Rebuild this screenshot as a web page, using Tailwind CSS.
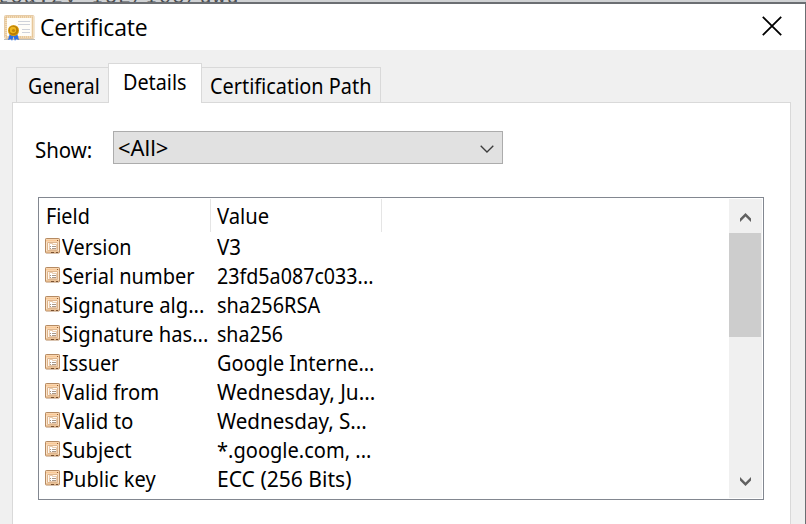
<!DOCTYPE html>
<html lang="en">
<head>
<meta charset="utf-8">
<title>Certificate</title>
<script src="https://cdn.jsdelivr.net/npm/@tailwindcss/browser@4"></script>
</head>
<body class="w-[806px] h-[524px] overflow-hidden bg-[#f0f0f0] text-black font-['Noto_Sans',Tahoma,sans-serif] text-[21.5px] whitespace-nowrap">
<svg class="hidden">
  <symbol id="field" viewBox="0 0 15 16">
    <rect x=".5" y=".5" width="14" height="14.5" rx=".7" fill="#fbe3c8" stroke="#b58a62"/>
    <path d="M1 1.5h13v2H1z" fill="#f8c897"/><path d="M12 2.5h1" stroke="#8b5a35"/>
    <path d="M2.5 4.5h10v8h-10z" fill="#fff8ef" stroke="#deb58d"/>
    <path d="M4.5 7.5v-2h3v1h4v5h-7z" fill="#fff" stroke="#e3bd98" stroke-width=".8"/>
    <path d="M5 8.5h1M7 8.5h4M5 10.5h1M7 10.5h4" stroke="#a89788"/>
    <path d="M1 14h13" stroke="#dba46d"/><path d="M6 14.5h3M11 14.5h2" stroke="#79502e"/>
  </symbol>
</svg>
<div class="flex flex-col w-[806px] h-[524px]">
  <div class="h-[4px] shrink-0 bg-[#d0d2d4] border-b-2 border-[#6b6e72] overflow-hidden relative">
    <div class="absolute -top-[12px] -left-[3px] text-[20px] leading-[20px] tracking-[1.5px] text-[#4b4e52] font-['Liberation_Mono',monospace]">tca.zy=IUE/Io5/uwu</div>
  </div>
  <div class="flex-1 flex flex-col border-r border-[#6b6e72]">
    <header class="h-[46px] shrink-0 bg-white flex">
      <svg class="mt-[10px] ml-[3px]" width="33" height="29" viewBox="0 0 33 29">
        <rect x="1.5" y="1.5" width="29.5" height="23" rx="1" fill="#fffdf8" stroke="#e6cba6"/>
        <rect x="3" y="3" width="26.5" height="20" fill="none" stroke="#f2dcba" stroke-width="2"/>
        <rect x="3" y="3" width="26.5" height="20" fill="none" stroke="#dcb27a" stroke-width="1" stroke-dasharray="1 1"/>
        <path d="M1 25.5h31" stroke="#bdbdb9"/>
        <path d="M15 7.5h12M15 10.5h12M19 15.5h8M19 18.5h8" stroke="#cfd2d9"/>
        <path d="M7 19l-2 7 3-1 1 2 2-6zM14 19l2 7-3-1-1 2-2-6z" fill="#2c6fe5"/>
        <circle cx="10.5" cy="16.5" r="5.5" fill="#d99b0c"/><circle cx="10.5" cy="16.5" r="4.6" fill="#b87c05"/>
        <circle cx="10" cy="16" r="3.2" fill="#efb71d"/><circle cx="10.5" cy="16.5" r="1.6" fill="#c38708"/>
      </svg>
      <h1 class="ml-[4px] mt-[7px] h-[32px] leading-[32px] text-[23px] font-['Open_Sans',sans-serif] tracking-[-0.15px]">Certificate</h1>
      <svg class="ml-auto mt-[12px] mr-[23px]" width="20" height="20" viewBox="0 0 20 20"><path d="M.8.8l18.4 18.4M19.2.8L.8 19.2" stroke="#000" stroke-width="1.8"/></svg>
    </header>
    <nav class="h-[40px] mt-[13px] shrink-0 flex items-end pl-[16px] pr-[14px] relative z-10">
      <div class="w-[93px] h-[36px] border border-r-0 border-[#d9d9d9] pl-[11px] pt-[3px] leading-[30px]"><span class="inline-block origin-left scale-x-[.905]">General</span></div>
      <div class="w-[94px] h-[40px] border border-b-0 border-[#d9d9d9] bg-white pl-[14px] pt-[4px] leading-[28px] -ml-px"><span class="inline-block origin-left scale-x-[.92]">Details</span></div>
      <div class="w-[179px] h-[36px] border border-l-0 border-[#d9d9d9] pl-[8px] pt-[3px] leading-[30px]"><span class="inline-block origin-left scale-x-[.925]">Certification Path</span></div>
    </nav>
    <main class="ml-[12px] mr-[14px] -mt-px flex-1 bg-white border border-b-0 border-[#d9d9d9]">
      <div class="mt-[28px] flex">
        <div class="w-[100px] pl-[22px] pt-[4px] leading-[30px]"><span class="inline-block origin-left scale-x-[.95]">Show:</span></div>
        <div class="w-[390px] h-[33px] border border-[#acacac] bg-[#e1e1e1] flex pl-[4px]">
          <span class="leading-[31px] origin-left scale-x-[1.02]">&lt;All&gt;</span>
          <svg class="ml-auto mt-[13px] mr-[8px]" width="14" height="8" viewBox="0 0 14 8"><path d="M.7.7L7 7 13.3.7" fill="none" stroke="#3c3c3c" stroke-width="1.3"/></svg>
        </div>
      </div>
      <div class="ml-[25px] mt-[32px] w-[726px] h-[303px] border border-[#828790] flex p-px pl-0">
        <div class="flex-1">
          <div class="h-[33px] flex leading-[34px]">
            <div class="w-[172px] pl-[7px] border-r border-[#e5e5e5]"><span class="inline-block origin-left scale-x-[.92]">Field</span></div>
            <div class="w-[171px] pl-[6px] border-r border-[#e5e5e5]"><span class="inline-block origin-left scale-x-[.94]">Value</span></div>
          </div>
          <div class="grid grid-cols-[23px_155px_1fr] auto-rows-[29px] leading-[29px]" id="rows"></div>
        </div>
        <div class="w-[33px] bg-[#f0f0f0] flex flex-col">
          <svg class="mt-[14px] ml-[11px] shrink-0" width="11" height="9" viewBox="0 0 11 9"><path d="M0 5.5L5.5 0 11 5.5V9L5.5 3.5 0 9z" fill="#606060"/></svg>
          <div class="w-[32px] h-[104px] mt-[11px] bg-[#cdcdcd]"></div>
          <svg class="mt-auto mb-[12px] ml-[11px] shrink-0" width="11" height="9" viewBox="0 0 11 9"><path d="M0 0l5.5 5.5L11 0v3.5L5.5 9 0 3.5z" fill="#606060"/></svg>
        </div>
      </div>
    </main>
  </div>
</div>
<script>
const rows = [
  ['Version', 'V3', 'scale-x-[.92]', 'scale-x-[.95]'],
  ['Serial number', '23fd5a087c033...', 'scale-x-[.93]', 'scale-x-[.915]'],
  ['Signature alg...', 'sha256RSA', 'scale-x-[.942]', 'scale-x-[.925]'],
  ['Signature has...', 'sha256', 'scale-x-[.938]', 'scale-x-[.91]'],
  ['Issuer', 'Google Interne...', 'scale-x-[.92]', 'scale-x-[.925]'],
  ['Valid from', 'Wednesday, Ju...', 'scale-x-[.94]', 'scale-x-[.967]'],
  ['Valid to', 'Wednesday, S...', 'scale-x-[.95]', 'scale-x-[.958]'],
  ['Subject', '*.google.com, ...', 'scale-x-[.94]', 'scale-x-[.933]'],
  ['Public key', 'ECC (256 Bits)', 'scale-x-[.93]', 'scale-x-[.98]']
];
document.getElementById('rows').innerHTML = rows.map(([f, v, fs, vs]) =>
  `<svg class="ml-[6px] mt-[6px] w-[15px] h-[16px]"><use href="#field"/></svg><span class="justify-self-start origin-left ${fs}">${f}</span><span class="justify-self-start origin-left ${vs}">${v}</span>`).join('');
</script>
</body>
</html>
